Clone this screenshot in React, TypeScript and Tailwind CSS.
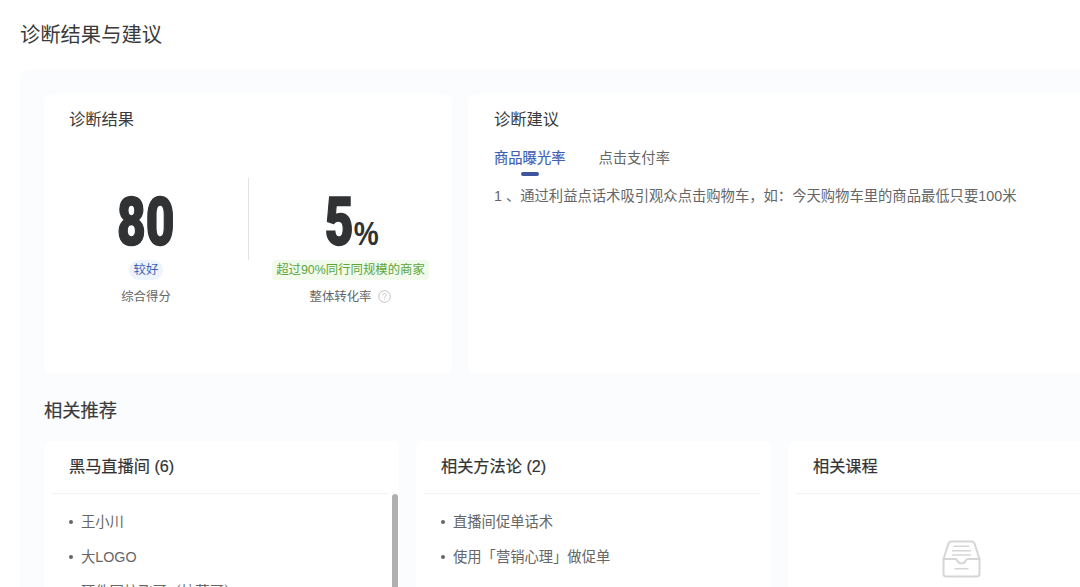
type ListItem = { id: number; label: string }

const rooms: ListItem[] = [
    { id: 1, label: '王小川' },
    { id: 2, label: '大LOGO' },
    { id: 3, label: '硬件网校飞哥（拉萨哥）' },
]

const methods: ListItem[] = [
    { id: 1, label: '直播间促单话术' },
    { id: 2, label: '使用「营销心理」做促单' },
]

function HelpIcon() {
    return (
        <svg className="mb-px size-[13px] shrink-0" viewBox="0 0 13 13" fill="none" stroke="#bdbdbd" strokeWidth="0.9">
            <circle cx="6.5" cy="6.5" r="5.8" />
            <path d="M4.9 5.2a1.6 1.6 0 1 1 2.5 1.3c-.6.4-.9.7-.9 1.3M6.5 8.9v.9" />
        </svg>
    )
}

function EmptyBox() {
    return (
        <svg className="w-[39px] h-[38px]" viewBox="0 0 39 39" preserveAspectRatio="none" fill="none" stroke="#d6d6d6" strokeWidth="2" strokeLinejoin="round" strokeLinecap="round">
            <path d="M1.5 19.5 6.5 3.5Q7.2 1.5 9 1.5h21Q31.8 1.5 32.5 3.5l5 16V35a2.5 2.5 0 0 1-2.500 2.500H4A2.500 2.500 0 0 1 1.500 35Z" />
            <path d="M1.500 19.500H13c1.500 0 2 .7 2.300 1.700.6 1.700 2 2.800 4.200 2.800s3.600-1.100 4.200-2.800c.3-1 .8-1.700 2.300-1.700h11.500" />
            <path d="M12 6.500h15M10.500 11h18M10.500 15.500h18M13 29.500h13" strokeWidth="1.500" />
        </svg>
    )
}

function BulletList({ items }: { items: ListItem[] }) {
    return (
        <ul className="pt-[10.5px] pl-[17px] text-[14.3px] leading-[34px] text-[#666]">
            {items.map((item) => (
                <li key={item.id} className="flex h-[35px] items-center gap-2 whitespace-nowrap">
                    <span className="size-1 rounded-full bg-[#666]" />
                    {item.label}
                </li>
            ))}
        </ul>
    )
}

function Panel({ title, children }: { title: string; children: React.ReactNode }) {
    return (
        <section className="w-[355px] shrink-0 rounded-lg bg-white pl-2">
            <h3 className="mr-[11px] h-[53px] border-b border-[#f2f2f2] pl-[17px] pt-[13px] text-[16.2px] leading-6 text-[#333] [-webkit-text-stroke:0.2px_#333]">{title}</h3>
            {children}
        </section>
    )
}

export default function App() {
    return (
        <div className="h-[587px] w-[1080px] overflow-hidden bg-white pl-5 font-['Liberation_Sans','Noto_Sans_CJK_SC',sans-serif] text-[#3a3a3a]">
            <h1 className="h-[70px] pt-5 text-[20.3px] leading-[30px]">诊断结果与建议</h1>

            <main className="h-[517px] overflow-hidden rounded-tl-lg bg-[#fafcfe] pt-6 pl-6">
                <div className="flex h-[280px] gap-4">
                    <section className="w-[408px] shrink-0 rounded-lg bg-white">
                        <h2 className="pt-[13px] pl-[25px] text-[16.3px] leading-6">诊断结果</h2>
                        <div className="mt-[47px] flex">
                            <div className="flex h-[82px] w-[205px] flex-col items-center border-r border-[#e3e3e3]">
                                <div className="h-[82px] shrink-0 scale-x-[.74] font-[Roboto,sans-serif] text-[67px] leading-[89px] font-black text-[#303233] [-webkit-text-stroke:1.5px_#303233]">80</div>
                                <span className="h-5 shrink-0 rounded-full bg-[#edf4fd] px-[5px] text-[12.4px] leading-[21px] text-[#3f5fb5]">较好</span>
                                <span className="mt-[6px] text-[12.4px] leading-[22px] text-[#666]">综合得分</span>
                            </div>
                            <div className="flex w-[203px] flex-col items-center">
                                <div className="flex h-[82px] shrink-0 scale-x-[.74] items-baseline font-[Roboto,sans-serif] font-black text-[#303233]">
                                    <span className="text-[67px] leading-[89px] [-webkit-text-stroke:1.5px_#303233]">5</span>
                                    <span className="inline-block origin-left scale-x-[1.15] font-['Liberation_Sans',sans-serif] text-[33px] font-bold">%</span>
                                </div>
                                <span className="h-5 shrink-0 rounded bg-[#f1faeb] px-1 text-[12.4px] leading-[21px] whitespace-nowrap text-[#5ba53c]">超过90%同行同规模的商家</span>
                                <span className="mt-[6px] flex items-center gap-[7px] text-[12.4px] leading-[22px] text-[#666]">
                                    整体转化率
                                    <HelpIcon />
                                </span>
                            </div>
                        </div>
                    </section>

                    <section className="w-[640px] shrink-0 rounded-lg bg-white pl-[26px]">
                        <h2 className="pt-[13px] text-[16.3px] leading-6">诊断建议</h2>
                        <div className="mt-4 flex gap-[33px] text-[14.3px] leading-[22px]">
                            <div className="flex flex-col items-center text-[#3f5fb5] [-webkit-text-stroke:0.2px_#3f5fb5]">
                                商品曝光率
                                <span className="mt-[3px] h-1 w-[18px] rounded-full bg-[#3f569f]" />
                            </div>
                            <div className="text-[#666]">点击支付率</div>
                        </div>
                        <p className="mt-[9px] text-[14.32px] leading-[22px] whitespace-nowrap text-[#666]">1 、通过利益点话术吸引观众点击购物车，如：今天购物车里的商品最低只要100米</p>
                    </section>
                </div>

                <h2 className="h-[67px] pt-[22px] text-[18.3px] leading-[29px] [-webkit-text-stroke:0.2px_#3a3a3a]">相关推荐</h2>

                <div className="flex h-[200px] gap-[17px]">
                    <Panel title="黑马直播间 (6)">
                        <div className="flex justify-between pr-px">
                            <BulletList items={rooms} />
                            <div className="h-[160px] w-[6px] rounded-full bg-[#b0b0b0]" />
                        </div>
                    </Panel>
                    <Panel title="相关方法论 (2)">
                        <BulletList items={methods} />
                    </Panel>
                    <Panel title="相关课程">
                        <div className="flex justify-center pt-[46px] pr-[17px]">
                            <EmptyBox />
                        </div>
                    </Panel>
                </div>
            </main>
        </div>
    )
}
